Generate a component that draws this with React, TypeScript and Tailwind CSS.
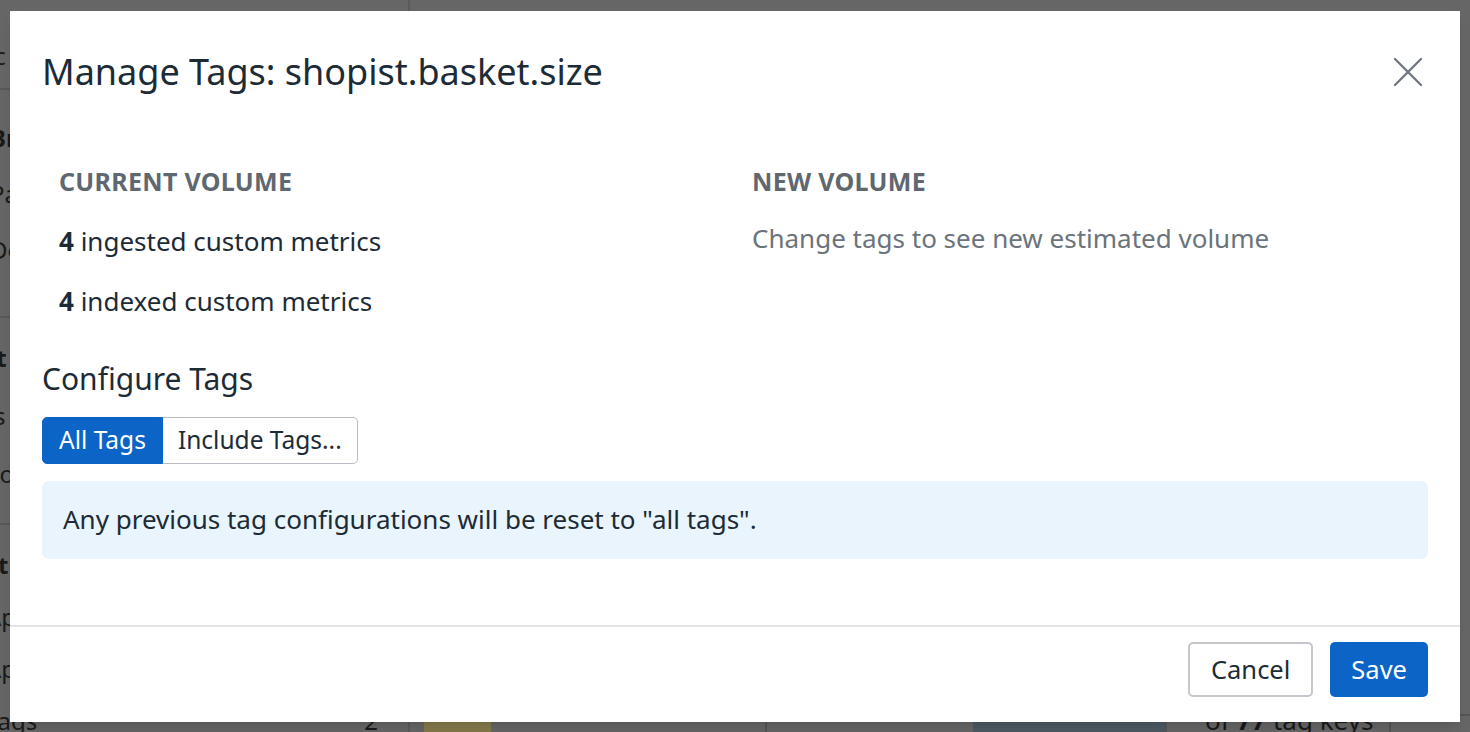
const font = { fontFamily: '"Noto Sans", "Open Sans", sans-serif' };

const Backdrop = () => (
  <div className="absolute inset-0 bg-[#666666] text-[#1a1a1a] text-[24px] overflow-hidden" style={font}>
    <div className="flex h-full">
      <div className="w-[410px] shrink-0 flex flex-col border-r-2 border-[#5a5a5a]">
        <div className="h-[90px] shrink-0 border-b-2 border-[#595959] flex items-end pb-[14px]">
          <span className="-ml-[12px]">ic</span>
        </div>
        <div className="h-[228px] shrink-0 border-b-2 border-[#595959] flex flex-col pt-[30px] gap-[20px] -ml-[10px]">
          <span className="font-bold">Br</span>
          <span>Pa:</span>
          <span>Do</span>
        </div>
        <div className="h-[207px] shrink-0 border-b-2 border-[#595959] flex flex-col pt-[22px] gap-[22px] -ml-[18px]">
          <span className="font-bold">et</span>
          <span>Ts</span>
          <span>Do</span>
        </div>
        <div className="flex flex-col pt-[22px] gap-[16px] -ml-[14px] shrink-0">
          <span className="font-bold">st</span>
          <span>Ap</span>
          <span>Ap</span>
          <div className="flex justify-between pr-[30px]">
            <span>Tags</span>
            <span>2</span>
          </div>
        </div>
      </div>
      <div className="flex-1 flex flex-col">
        <div className="flex-1" />
        <div className="h-[14px] shrink-0 flex items-start">
          <div className="ml-[14px] mt-[3px] w-[67px] h-[12px] bg-[#857a4c]" />
          <div className="ml-[274px] w-[402px] h-[14px] rounded-t-[6px] border-2 border-b-0 border-[#555] flex">
            <div className="flex-1" />
            <div className="w-[192px] bg-[#4d5a63]" />
          </div>
          <div className="ml-[38px] -mt-[14px] text-[26px] leading-[32px] whitespace-nowrap">
            of <span className="font-bold">77</span> tag keys
          </div>
          <div className="ml-[16px] -mt-[4px] w-[120px] h-[20px] rounded-t-[6px] border-2 border-[#555]" />
        </div>
      </div>
    </div>
  </div>
);

const CloseIcon = () => (
  <svg width="30" height="30" viewBox="0 0 30 30" fill="none" stroke="currentColor" strokeWidth="2.2" strokeLinecap="round">
    <path d="M2 2 L28 28 M28 2 L2 28" />
  </svg>
);

export default function App() {
  return (
    <div className="relative h-[732px] w-full overflow-hidden" style={font}>
      <Backdrop />
      <div className="absolute inset-0 flex items-center justify-center">
        <div className="w-[1450px] h-[711px] bg-white flex flex-col text-[#1c2b36] shadow-lg">
          <div className="flex items-start justify-between pl-[32px] pr-[37px] pt-[39px]">
            <h1 className="text-[36px] leading-[44px]">Manage Tags: shopist.basket.size</h1>
            <button className="mt-[7px] text-[#6c737c]">
              <CloseIcon />
            </button>
          </div>

          <div className="grid grid-cols-[693px_1fr] pl-[49px] pt-[71px]">
            <div className="flex flex-col">
              <div className="text-[25px] leading-[32px] font-bold text-[#5f6770] tracking-[0.3px]">CURRENT VOLUME</div>
              <div className="text-[26px] leading-[34px] mt-[27px]">
                <span className="font-bold">4</span> ingested custom metrics
              </div>
              <div className="text-[26px] leading-[34px] mt-[26px]">
                <span className="font-bold">4</span> indexed custom metrics
              </div>
            </div>
            <div className="flex flex-col">
              <div className="text-[25px] leading-[32px] font-bold text-[#5f6770] tracking-[0.3px]">NEW VOLUME</div>
              <div className="text-[26px] leading-[34px] mt-[24px] text-[#6b737c]">
                Change tags to see new estimated volume
              </div>
            </div>
          </div>

          <div className="px-[32px] pt-[42px]">
            <h2 className="text-[30px] leading-[38px]">Configure Tags</h2>
            <div className="mt-[19px] flex">
              <button className="h-[47px] px-[16px] bg-[#0b64c6] text-white text-[24.5px] rounded-l-[5px] border border-[#0b64c6]">
                All Tags
              </button>
              <button className="h-[47px] px-[15px] bg-white text-[24.5px] rounded-r-[5px] border border-l-0 border-[#b7bcc4]">
                Include Tags...
              </button>
            </div>
            <div className="mt-[17px] h-[78px] rounded-[7px] bg-[#e9f4fc] flex items-center px-[21px] text-[26px]">
              Any previous tag configurations will be reset to "all tags".
            </div>
          </div>

          <div className="mt-auto border-t-2 border-[#e3e4e6] flex justify-end gap-[17px] pr-[32px] pt-[15px] pb-[25px]">
            <button className="h-[55px] px-[21px] rounded-[5px] border-2 border-[#c4c7cc] text-[25.5px] bg-white">
              Cancel
            </button>
            <button className="h-[55px] px-[21px] rounded-[5px] bg-[#0b64c6] text-white text-[25.5px]">
              Save
            </button>
          </div>
        </div>
      </div>
    </div>
  );
}
